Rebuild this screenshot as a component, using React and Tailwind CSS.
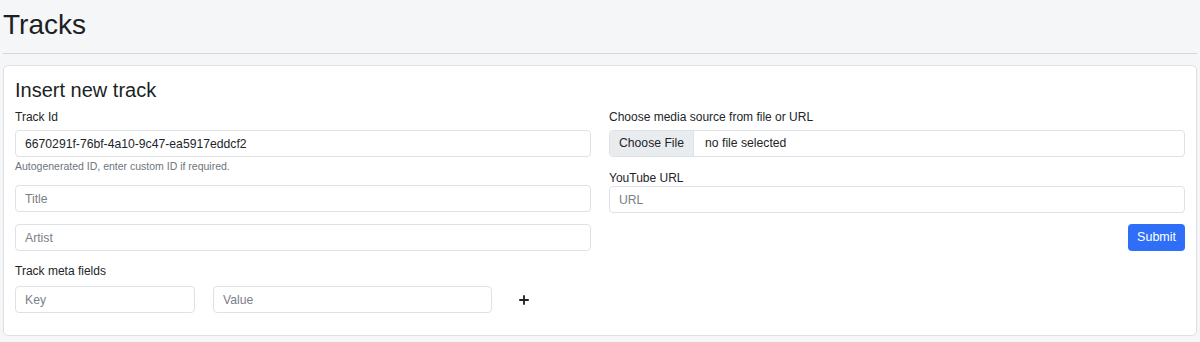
import { Plus } from 'lucide-react'

const inputCls =
  'block h-[27px] w-full rounded-[4px] border border-[#dee2e6] bg-white px-[9px] text-[12.2px] text-[#212529] placeholder:text-[#7b8087] outline-none'

function Label({ children, className = '' }) {
  return <div className={`text-[12px] leading-[18px] text-[#212529] ${className}`}>{children}</div>
}

export default function App() {
  return (
    <div className="min-h-[342px] bg-[#f5f6f8] px-[3px] font-['Liberation_Sans',Arial,sans-serif] text-[#212529]">
      <h1 className="pt-[8px] text-[28px] font-medium leading-[34px] text-[#1c1f23]">Tracks</h1>
      <hr className="mt-[11px] border-0 border-t-[1.5px] border-[#d4d6d9]" />

      <div className="mt-[11px] rounded-[5px] border border-[#dfe1e4] bg-white px-[11px] pb-[22px] pt-[12px]">
        <h2 className="mb-[6px] text-[20px] font-medium leading-[24px] text-[#1c1f23]">Insert new track</h2>

        <div className="grid grid-cols-2 gap-x-[18px]">
          <div>
            <Label className="mb-[4px]">Track Id</Label>
            <input className={inputCls} defaultValue="6670291f-76bf-4a10-9c47-ea5917eddcf2" />
            <div className="mt-[2px] text-[10.5px] leading-[15px] text-[#6c757d]">
              Autogenerated ID, enter custom ID if required.
            </div>
            <input className={`${inputCls} mt-[11px]`} placeholder="Title" />
            <input className={`${inputCls} mt-[12px]`} placeholder="Artist" />
            <Label className="mb-[6px] mt-[11px]">Track meta fields</Label>
            <div className="flex items-center">
              <input className={`${inputCls} w-[180px]!`} placeholder="Key" />
              <input className={`${inputCls} ml-[18px] w-[279px]!`} placeholder="Value" />
              <Plus className="ml-[25px] h-[14px] w-[14px] text-[#212529]" strokeWidth={3.2} />
            </div>
          </div>

          <div>
            <Label className="mb-[4px]">Choose media source from file or URL</Label>
            <div className="flex h-[27px] items-stretch overflow-hidden rounded-[4px] border border-[#dee2e6] text-[12.2px]">
              <button className="border-r border-[#dee2e6] bg-[#e9ecef] px-[9px] text-[#212529]">Choose File</button>
              <span className="flex items-center pl-[11px] text-[#212529]">no file selected</span>
            </div>
            <Label className="mb-[-1px] mt-[12px]">YouTube URL</Label>
            <input className={inputCls} placeholder="URL" />
            <div className="mt-[11px] flex justify-end">
              <button className="h-[27px] rounded-[4px] bg-[#2f6ff7] px-[9px] text-[12.5px] text-white">Submit</button>
            </div>
          </div>
        </div>
      </div>
    </div>
  )
}
